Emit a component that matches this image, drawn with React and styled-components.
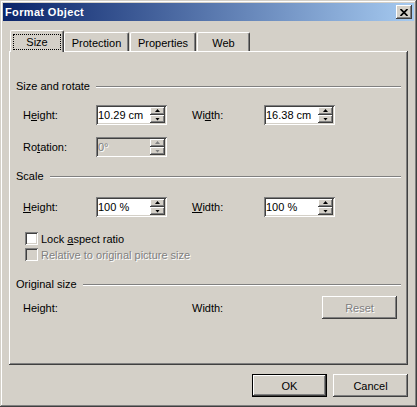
import React from 'react'
import styled, { createGlobalStyle, css } from 'styled-components'

const GlobalStyle = createGlobalStyle`
  html, body {
    margin: 0;
    padding: 0;
    background: #d4d0c8;
  }
  body {
    font-family: "Liberation Sans", Arial, sans-serif;
    font-size: 11px;
    color: #000;
  }
`

const raised = css`
  box-shadow: inset -1px -1px #404040, inset 1px 1px #ffffff,
    inset -2px -2px #808080, inset 2px 2px #d4d0c8;
`

const sunken = css`
  box-shadow: inset 1px 1px #808080, inset -1px -1px #ffffff,
    inset 2px 2px #404040, inset -2px -2px #d4d0c8;
`

const disabledText = css`
  color: #808080;
  text-shadow: 1px 1px 0 #ffffff;
`

const Window = styled.div`
  width: 417px;
  height: 407px;
  box-sizing: border-box;
  padding: 3px;
  background: #d4d0c8;
  box-shadow: inset -1px -1px #404040, inset 1px 1px #d4d0c8,
    inset -2px -2px #808080, inset 2px 2px #ffffff;
  display: flex;
  flex-direction: column;
`

const TitleBar = styled.div`
  height: 18px;
  display: flex;
  align-items: center;
  padding-left: 2px;
  background: linear-gradient(to right, #0a246a, #a6caf0);
  color: #fff;
  font-weight: bold;
  letter-spacing: 0.35px;
`

const TitleText = styled.span`
  flex: 1;
`

const CloseButton = styled.div`
  width: 16px;
  height: 14px;
  margin-right: 2px;
  background: #d4d0c8;
  display: flex;
  align-items: center;
  justify-content: center;
  ${raised}
`

const TabRow = styled.div`
  display: flex;
  align-items: flex-start;
  height: 21px;
  margin: 9px 0 0 7px;
`

const Tab = styled.div`
  box-sizing: border-box;
  width: ${(p) => p.$w}px;
  height: ${(p) => (p.$active ? 22 : 19)}px;
  margin-top: ${(p) => (p.$active ? 0 : 2)}px;
  margin-left: ${(p) => p.$gap || 0}px;
  padding-top: ${(p) => (p.$active ? 0 : 1)}px;
  background: #d4d0c8;
  border-left: 1px solid #fff;
  border-top: 1px solid #fff;
  border-right: 1px solid #404040;
  border-top-left-radius: 2px;
  border-top-right-radius: 2px;
  box-shadow: inset -1px 0 #808080;
  display: flex;
  align-items: center;
  justify-content: center;
  position: relative;
  z-index: ${(p) => (p.$active ? 1 : 0)};
`

const FocusLabel = styled.span`
  box-sizing: border-box;
  width: 48px;
  height: 16px;
  line-height: 14px;
  text-align: center;
  border: 1px dotted #000;
`

const Panel = styled.div`
  height: 314px;
  box-sizing: border-box;
  margin: 0 6px;
  padding: 29px 7px 0;
  background: #d4d0c8;
  box-shadow: inset -1px -1px #404040, inset 1px 1px #ffffff,
    inset -2px -2px #808080;
  display: flex;
  flex-direction: column;
`

const GroupHeader = styled.div`
  height: 13px;
  line-height: 13px;
  display: flex;
  align-items: center;
  margin-top: ${(p) => p.$mt || 0}px;

  &::after {
    content: '';
    flex: 1;
    height: 0;
    margin-left: 6px;
    border-top: 1px solid #808080;
    border-bottom: 1px solid #ffffff;
  }
`

const FieldRow = styled.div`
  display: grid;
  grid-template-columns: 73px 96px 72px 1fr;
  align-items: center;
  height: ${(p) => p.$h || 20}px;
  padding-left: 7px;
  margin-top: ${(p) => p.$mt || 0}px;
`

const Label = styled.span`
  ${(p) => p.$disabled && disabledText}
`

const SpinBox = styled.div`
  width: 71px;
  height: 20px;
  box-sizing: border-box;
  padding: 2px;
  display: flex;
  background: ${(p) => (p.$disabled ? '#d4d0c8' : '#ffffff')};
  ${sunken}
`

const SpinValue = styled.span`
  flex: 1;
  line-height: 16px;
  ${(p) => p.$disabled && disabledText}
`

const SpinButtons = styled.div`
  width: 15px;
  display: flex;
  flex-direction: column;
`

const SpinButton = styled.div`
  flex: 1;
  background: #d4d0c8;
  display: flex;
  align-items: center;
  justify-content: center;
  ${raised}
`

const Arrow = styled.span`
  width: 5px;
  height: 3px;
  background: ${(p) => (p.$disabled ? '#808080' : '#000')};
  clip-path: ${(p) =>
    p.$down ? 'polygon(0 0, 100% 0, 50% 100%)' : 'polygon(50% 0, 100% 100%, 0 100%)'};
  margin-top: ${(p) => (p.$down ? 0 : -1)}px;
`

const CheckRow = styled.label`
  display: flex;
  align-items: center;
  gap: 3px;
  height: 13px;
  padding-left: 9px;
  margin-top: ${(p) => p.$mt || 0}px;
  ${(p) => p.$disabled && disabledText}
`

const CheckBox = styled.span`
  width: 13px;
  height: 13px;
  box-sizing: border-box;
  background: ${(p) => (p.$disabled ? '#d4d0c8' : '#ffffff')};
  ${sunken}
`

const Button = styled.button`
  width: 75px;
  height: 23px;
  border: none;
  padding: 0;
  font: inherit;
  color: #000;
  background: #d4d0c8;
  ${raised}
  ${(p) =>
    p.$default &&
    css`
      box-shadow: inset 0 0 0 1px #000, inset -2px -2px #404040,
        inset 2px 2px #ffffff, inset -3px -3px #808080;
    `}
  ${(p) => p.$disabled && disabledText}
  justify-self: end;
  margin-right: ${(p) => p.$mr || 0}px;
`

const Footer = styled.div`
  display: flex;
  justify-content: flex-end;
  gap: 6px;
  padding-right: 6px;
  margin-top: 9px;
`

const Spin = ({ value, disabled }) => (
  <SpinBox $disabled={disabled}>
    <SpinValue $disabled={disabled}>{value}</SpinValue>
    <SpinButtons>
      <SpinButton>
        <Arrow $disabled={disabled} />
      </SpinButton>
      <SpinButton>
        <Arrow $down $disabled={disabled} />
      </SpinButton>
    </SpinButtons>
  </SpinBox>
)

const tabs = [
  { label: 'Size', w: 54, active: true },
  { label: 'Protection', w: 65 },
  { label: 'Properties', w: 66, gap: 1 },
  { label: 'Web', w: 53, gap: 1 },
]

const App = () => {
  return (
    <>
      <GlobalStyle />
      <Window>
        <TitleBar>
          <TitleText>Format Object</TitleText>
          <CloseButton>
            <svg width="8" height="7" viewBox="0 0 8 7">
              <path d="M0.5 0 L7.5 7 M7.5 0 L0.5 7" stroke="#000" strokeWidth="1.7" />
            </svg>
          </CloseButton>
        </TitleBar>

        <TabRow>
          {tabs.map((t) => (
            <Tab key={t.label} $w={t.w} $gap={t.gap} $active={t.active}>
              {t.active ? <FocusLabel>{t.label}</FocusLabel> : t.label}
            </Tab>
          ))}
        </TabRow>

        <Panel>
          <GroupHeader>Size and rotate</GroupHeader>
          <FieldRow $mt={12}>
            <Label>
              H<u>e</u>ight:
            </Label>
            <Spin value="10.29 cm" />
            <Label>
              Wi<u>d</u>th:
            </Label>
            <Spin value="16.38 cm" />
          </FieldRow>
          <FieldRow $mt={12}>
            <Label>
              Ro<u>t</u>ation:
            </Label>
            <Spin value="0°" disabled />
          </FieldRow>

          <GroupHeader $mt={13}>Scale</GroupHeader>
          <FieldRow $mt={14}>
            <Label>
              <u>H</u>eight:
            </Label>
            <Spin value="100 %" />
            <Label>
              <u>W</u>idth:
            </Label>
            <Spin value="100 %" />
          </FieldRow>
          <CheckRow $mt={15}>
            <CheckBox />
            <span>
              Lock <u>a</u>spect ratio
            </span>
          </CheckRow>
          <CheckRow $mt={3} $disabled>
            <CheckBox $disabled />
            <span>Relative to original picture size</span>
          </CheckRow>

          <GroupHeader $mt={17}>Original size</GroupHeader>
          <FieldRow $mt={5} $h={23}>
            <Label>Height:</Label>
            <span />
            <Label>Width:</Label>
            <Button $disabled $mr={4}>
              Reset
            </Button>
          </FieldRow>
        </Panel>

        <Footer>
          <Button $default>OK</Button>
          <Button>Cancel</Button>
        </Footer>
      </Window>
    </>
  )
}

export default App
